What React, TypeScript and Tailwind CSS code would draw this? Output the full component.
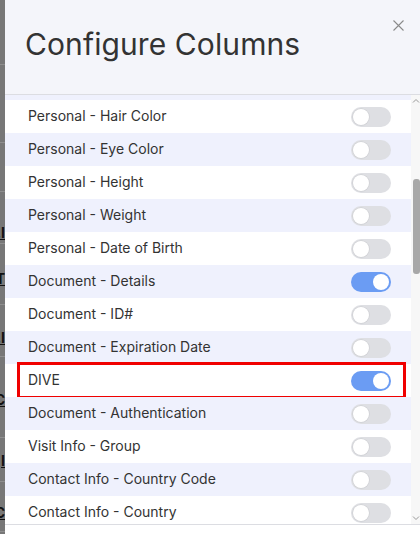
import React from "react";

type Row = { label: string; on: boolean; boxed?: boolean };

const rows: Row[] = [
  { label: "Personal - Hair Color", on: false },
  { label: "Personal - Eye Color", on: false },
  { label: "Personal - Height", on: false },
  { label: "Personal - Weight", on: false },
  { label: "Personal - Date of Birth", on: false },
  { label: "Document - Details", on: true },
  { label: "Document - ID#", on: false },
  { label: "Document - Expiration Date", on: false },
  { label: "DIVE", on: true, boxed: true },
  { label: "Document - Authentication", on: false },
  { label: "Visit Info - Group", on: false },
  { label: "Contact Info - Country Code", on: false },
  { label: "Contact Info - Country", on: false },
];

function Toggle({ on }: { on: boolean }) {
  return (
    <div
      className={
        on
          ? "relative w-[40px] h-[20px] rounded-full bg-[#6b9cf3]"
          : "relative w-[40px] h-[20px] rounded-full bg-[#dedfe3]"
      }
    >
      <div
        className={
          on
            ? "absolute top-[2px] left-[22px] w-[16px] h-[16px] rounded-full bg-white"
            : "absolute top-[2px] left-[2px] w-[16px] h-[16px] rounded-full bg-white shadow-[0_0_0_0.75px_#cfd0d4]"
        }
      />
    </div>
  );
}

const stripMarks: { top: number; kind: "line" | "text"; ch?: string }[] = [
  { top: 64, kind: "line" },
  { top: 142, kind: "line" },
  { top: 191, kind: "line" },
  { top: 226, kind: "text", ch: ".I" },
  { top: 243, kind: "line" },
  { top: 272, kind: "text", ch: "T" },
  { top: 304, kind: "line" },
  { top: 331, kind: "text", ch: ".I" },
  { top: 356, kind: "line" },
  { top: 393, kind: "text", ch: "C" },
  { top: 437, kind: "line" },
  { top: 454, kind: "text", ch: "I" },
  { top: 481, kind: "line" },
  { top: 506, kind: "text", ch: "C" },
  { top: 531, kind: "line" },
];

export default function App() {
  return (
    <div
      className="flex w-[420px] h-[534px] overflow-hidden bg-white"
      style={{ fontFamily: "Inter, 'Noto Sans', sans-serif" }}
    >
      {/* backdrop strip */}
      <div className="relative w-[5px] h-full bg-[#777777] shrink-0 overflow-hidden">
        {stripMarks.map((m, i) =>
          m.kind === "line" ? (
            <div key={i} className="absolute left-0 w-[5px] h-px bg-[#8e8e8e]" style={{ top: m.top }} />
          ) : (
            <div
              key={i}
              className="absolute right-0 text-[14px] leading-[14px] font-bold text-[#111] underline"
              style={{ top: m.top }}
            >
              {m.ch}
            </div>
          )
        )}
      </div>

      {/* modal */}
      <div className="flex flex-col flex-1 h-full bg-white">
        <div className="relative h-[95px] shrink-0 bg-[#f4f5fa] border-b border-[#dcdde2]">
          <div className="pl-[20px] pt-[26px] text-[30px] leading-[36px] text-[#333333] tracking-[0.1px]">
            Configure Columns
          </div>
          <svg
            className="absolute left-[388px] top-[20px]"
            width="11"
            height="11"
            viewBox="0 0 11 11"
          >
            <path d="M0.5 0.5 L10.5 10.5 M10.5 0.5 L0.5 10.5" stroke="#8a8a8a" strokeWidth="1.1" />
          </svg>
        </div>

        <div className="flex h-[430px] shrink-0 border-b border-[#dcdde2]">
          <div className="flex-1 overflow-hidden">
            <div className="-mt-[28px]">
              <div className="h-[33px] bg-[#eff1fd]" />
              {rows.map((r, i) => (
                <div
                  key={r.label}
                  className={
                    i % 2 === 0
                      ? "relative flex items-center justify-between h-[33px] pl-[23px] pr-[20px] bg-white"
                      : "relative flex items-center justify-between h-[33px] pl-[23px] pr-[20px] bg-[#eff1fd]"
                  }
                >
                  <span className="text-[14px] leading-[20px] pb-[2px] text-[#333333]">{r.label}</span>
                  <Toggle on={r.on} />
                  {r.boxed && (
                    <div className="absolute -top-[2px] -bottom-[2px] left-[12px] right-[5px] border-[3px] border-[#f00000]" />
                  )}
                </div>
              ))}
            </div>
          </div>
          {/* scrollbar */}
          <div className="flex flex-col items-center w-[9px] h-full bg-[#f7f7f7] shrink-0">
            <svg className="mt-[3px]" width="8" height="6" viewBox="0 0 8 6">
              <path d="M1 4.5 L4 1.5 L7 4.5" stroke="#9a9a9a" strokeWidth="1" fill="none" />
            </svg>
            <div className="mt-[75px] ml-[2px] w-[7px] h-[95px] rounded-[3px] bg-[#a8a8a8]" />
            <div className="flex-1" />
            <svg className="mb-[3px]" width="8" height="6" viewBox="0 0 8 6">
              <path d="M1 1.5 L4 4.5 L7 1.5" stroke="#9a9a9a" strokeWidth="1" fill="none" />
            </svg>
          </div>
        </div>
        <div className="flex-1 bg-white" />
      </div>
    </div>
  );
}
